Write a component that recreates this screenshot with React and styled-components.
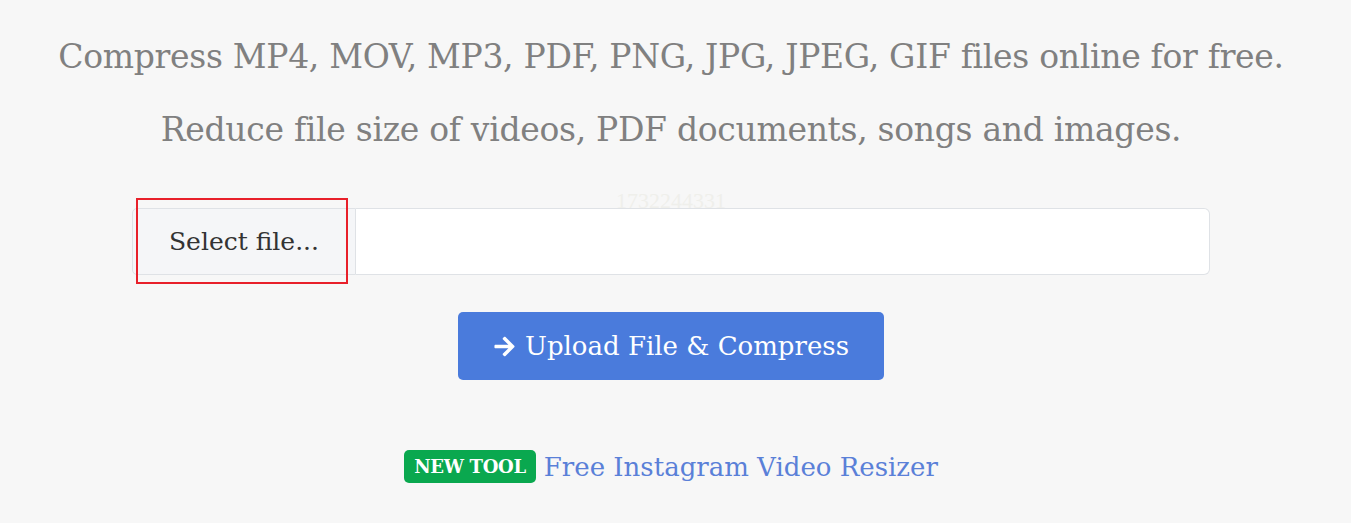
import React from 'react';
import styled, {createGlobalStyle} from 'styled-components';

const Global = createGlobalStyle`
    html, body {
        margin: 0;
        background: #f7f7f7;
    }
    body {
        font-family: "DejaVu Serif", "Liberation Serif", serif;
    }
`

const Page = styled.div`
    display: flex;
    flex-direction: column;
    align-items: center;
    padding: 30px 9px 0 0;
`

const Lead = styled.p`
    margin: 0 0 ${p => p.gap}px;
    font-size: 33px;
    line-height: 54px;
    color: #808080;
    letter-spacing: -0.3px;
`

const Watermark = styled.div`
    height: 15px;
    margin-top: 36px;
    font-size: 22px;
    line-height: 15px;
    color: #efefeb;
    font-family: "Liberation Serif", serif;
`

const FileGroup = styled.div`
    position: relative;
    display: flex;
    width: 1078px;
    height: 67px;
    margin-bottom: 37px;
`

const SelectButton = styled.div`
    display: flex;
    align-items: center;
    justify-content: center;
    width: 224px;
    background: #f5f6f8;
    border: 1px solid #dfe2e6;
    border-radius: 5px 0 0 5px;
    font-size: 25px;
    color: #333;
    box-sizing: border-box;
`

const Highlight = styled.div`
    position: absolute;
    left: 4px;
    top: -10px;
    width: 212px;
    height: 86px;
    border: 2px solid #e8202a;
    box-sizing: border-box;
    pointer-events: none;
`

const FileInput = styled.div`
    flex: 1;
    background: #fff;
    border: 1px solid #dfe2e6;
    border-left: none;
    border-radius: 0 6px 6px 0;
`

const UploadButton = styled.button`
    display: flex;
    align-items: center;
    gap: 9px;
    width: 426px;
    height: 68px;
    justify-content: center;
    background: #4a7bdc;
    border: none;
    border-radius: 5px;
    color: #fff;
    font-family: inherit;
    font-size: 26px;
    margin-bottom: 70px;
    svg {
        width: 23px;
        height: 23px;
    }
`

const PromoRow = styled.div`
    display: flex;
    align-items: center;
    gap: 8px;
`

const Badge = styled.span`
    background: #0aa84f;
    color: #fff;
    font-weight: bold;
    font-size: 18px;
    padding: 6px 10px;
    border-radius: 5px;
    letter-spacing: -0.3px;
`

const PromoLink = styled.a`
    color: #5a80d8;
    font-size: 26px;
    text-decoration: none;
`

const ArrowIcon = () => (
    <svg viewBox="0 0 448 512">
        <path fill="#fff" d="M190.5 66.9l22.2-22.2c9.4-9.4 24.6-9.4 33.9 0L441 239c9.4 9.4 9.4 24.6 0 33.9L246.6 467.3c-9.4 9.4-24.6 9.4-33.9 0l-22.2-22.2c-9.5-9.5-9.3-25 .4-34.3L311.4 296H24c-13.3 0-24-10.7-24-24v-32c0-13.3 10.7-24 24-24h287.4L190.9 101.2c-9.8-9.3-10-24.8-.4-34.3z"/>
    </svg>
)

const App = () => {
    return (
        <Page>
            <Global/>
            <Lead gap={19}>Compress MP4, MOV, MP3, PDF, PNG, JPG, JPEG, GIF files online for free.</Lead>
            <Lead gap={0}>Reduce file size of videos, PDF documents, songs and images.</Lead>
            <Watermark>1732244331</Watermark>
            <FileGroup>
                <SelectButton>Select file...</SelectButton>
                <Highlight/>
                <FileInput/>
            </FileGroup>
            <UploadButton><ArrowIcon/>Upload File &amp; Compress</UploadButton>
            <PromoRow>
                <Badge>NEW TOOL</Badge>
                <PromoLink href="#">Free Instagram Video Resizer</PromoLink>
            </PromoRow>
        </Page>
    )
}

export default App
